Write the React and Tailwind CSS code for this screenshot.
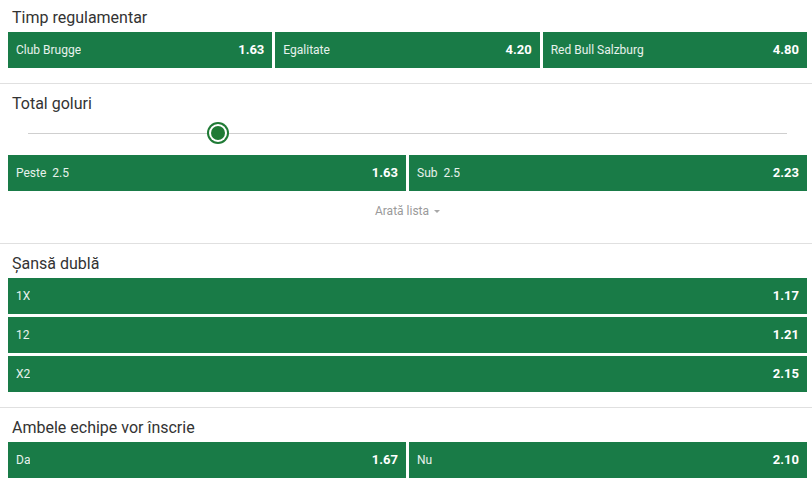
function Odd({ label, value, row }) {
  return (
    <button
      type="button"
      className={`flex h-9 min-w-0 items-center justify-between bg-[#197b47] px-2 text-left ${row ? 'w-full' : 'flex-1'}`}
    >
      <span className="truncate text-[12px] text-white/90">{label}</span>
      <span className="text-[13px] font-bold text-white">{value}</span>
    </button>
  )
}

function Section({ title, children, first, last, pb = 'pb-[15px]' }) {
  return (
    <section
      className={`pl-2 pr-[5px] ${first ? 'pt-[6px]' : 'pt-2'} ${last ? 'pb-2' : `border-b border-[#e0e0e0] ${pb}`}`}
    >
      <h2 className="mb-[2px] h-6 pl-1 text-[16px] leading-6 text-[#333]">{title}</h2>
      {children}
    </section>
  )
}

export default function App() {
  return (
    <div className="w-[812px] bg-white" style={{ fontFamily: 'Roboto, "Liberation Sans", sans-serif' }}>
      <Section title="Timp regulamentar" first>
        <div className="flex gap-[3px]">
          <Odd label="Club Brugge" value="1.63" />
          <Odd label="Egalitate" value="4.20" />
          <Odd label="Red Bull Salzburg" value="4.80" />
        </div>
      </Section>

      <Section title="Total goluri" pb="pb-3">
        <div className="relative mx-5 h-[37px] pt-[15px]">
          <div className="h-px w-full bg-[#cfcfcf]" />
          <div className="absolute left-[179px] top-[4px] flex h-[22px] w-[22px] items-center justify-center rounded-full bg-[#1f7a35]">
            <div className="flex h-[18px] w-[18px] items-center justify-center rounded-full bg-white">
              <div className="h-[14px] w-[14px] rounded-full bg-[#1f7a35]" />
            </div>
          </div>
        </div>
        <div className="flex gap-[3px]">
          <Odd label={<>Peste&nbsp; 2.5</>} value="1.63" />
          <Odd label={<>Sub&nbsp; 2.5</>} value="2.23" />
        </div>
        <div className="flex h-10 items-center justify-center gap-[5px] text-[12px] text-[#9a9a9a]">
          <span>Arată lista</span>
          <span className="h-0 w-0 border-x-[3px] border-t-[3px] border-x-transparent border-t-[#a8a8a8]" />
        </div>
      </Section>

      <Section title="Șansă dublă">
        <div className="flex flex-col gap-[3px]">
          <Odd row label="1X" value="1.17" />
          <Odd row label="12" value="1.21" />
          <Odd row label="X2" value="2.15" />
        </div>
      </Section>

      <Section title="Ambele echipe vor înscrie" last>
        <div className="flex gap-[3px]">
          <Odd label="Da" value="1.67" />
          <Odd label="Nu" value="2.10" />
        </div>
      </Section>
    </div>
  )
}
